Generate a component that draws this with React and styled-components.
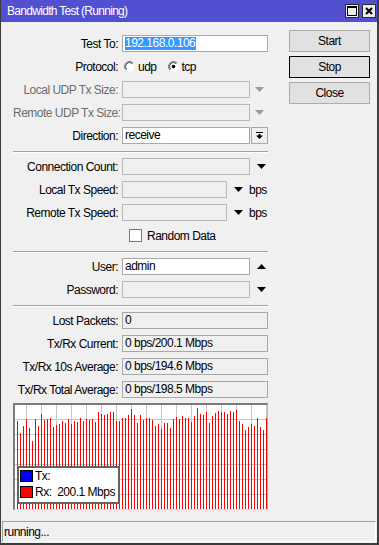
import React from 'react';
import styled, { createGlobalStyle } from 'styled-components';

const Global = createGlobalStyle`
  html, body { margin: 0; padding: 0; background: #f0f0f0; }
  body {
    font-family: "Liberation Sans", Arial, sans-serif;
    font-size: 12px;
    letter-spacing: -0.5px;
    color: #000;
  }
`;

const Window = styled.div`
  width: 379px;
  height: 545px;
  box-sizing: border-box;
  display: flex;
  flex-direction: column;
  background: #f0f0f0;
  border-left: 1px solid #3c3c3c;
  border-right: 2px solid #3c3c3c;
  border-bottom: 2px solid #3c3c3c;
`;

const TitleBar = styled.div`
  height: 22px;
  flex: none;
  background: #5050d0;
  color: #fff;
  display: flex;
  align-items: center;
  padding: 0 1px 0 6px;
  font-size: 12px;
  letter-spacing: -0.7px;
`;

const TitleText = styled.div`
  flex: 1;
  white-space: nowrap;
`;

const TitleButtons = styled.div`
  display: flex;
  gap: 3px;
`;

const TitleBtn = styled.div`
  width: 14px;
  height: 14px;
  box-sizing: border-box;
  border: 1px solid #2a2a2a;
  background: #ececec;
  display: flex;
  align-items: center;
  justify-content: center;
`;

const Main = styled.div`
  display: flex;
  padding: 8px 0 0 12px;
`;

const Form = styled.div`
  width: 255px;
  margin-top: 5px;
  display: flex;
  flex-direction: column;
  gap: 6px;
`;

const Row = styled.div`
  display: grid;
  grid-template-columns: 105px 146px;
  column-gap: 4px;
  align-items: center;
  height: 17px;
`;

const Label = styled.div`
  text-align: right;
  white-space: nowrap;
  color: ${(p) => (p.$disabled ? '#6d6d6d' : '#000')};
`;

const Control = styled.div`
  display: flex;
  align-items: center;
  height: 17px;
`;

const fieldBg = { edit: '#fff', disabled: '#f0f0f0', status: '#f0f0f0' };
const fieldBorder = { edit: '#a8a8a8', disabled: '#b9b9b9', status: '#a8a8a8' };

const Field = styled.div`
  box-sizing: border-box;
  height: 17px;
  width: ${(p) => p.$w}px;
  flex: none;
  border: 1px solid ${(p) => fieldBorder[p.$kind]};
  background: ${(p) => fieldBg[p.$kind]};
  padding: 0 2px;
  line-height: 15px;
  white-space: nowrap;
  overflow: hidden;
`;

const Selected = styled.span`
  background: #3399ff;
  color: #fff;
  display: inline-block;
  line-height: 13px;
  padding: 0 1px 0 0;
`;

const ArrowSlot = styled.div`
  width: ${(p) => p.$w}px;
  flex: none;
  display: flex;
  align-items: center;
  justify-content: center;
`;

const Unit = styled.span`
  margin-left: 0;
`;

const DropBtn = styled.div`
  box-sizing: border-box;
  width: 17px;
  height: 17px;
  margin-left: 1px;
  border: 1px solid #a8a8a8;
  background: #f0f0f0;
  display: flex;
  align-items: center;
  justify-content: center;
`;

const Radios = styled.div`
  display: flex;
  align-items: center;
  padding-left: 2px;
  gap: 11px;
`;

const RadioItem = styled.label`
  display: flex;
  align-items: center;
  gap: 3px;
`;

const CheckRow = styled.div`
  display: flex;
  align-items: center;
  gap: 5px;
  padding-left: 7px;
`;

const CheckBox = styled.div`
  width: 13px;
  height: 13px;
  box-sizing: border-box;
  border: 1px solid #7a7a7a;
  background: #fff;
`;

const Separator = styled.div`
  height: 1px;
  margin-top: 1px;
  background: #a0a0a0;
  box-shadow: 0 1px 0 #fff;
`;

const ButtonCol = styled.div`
  width: 81px;
  margin-left: 21px;
  display: flex;
  flex-direction: column;
  gap: 4px;
`;

const Button = styled.div`
  box-sizing: border-box;
  height: 22px;
  border: 1px solid ${(p) => (p.$focused ? '#000' : '#adadad')};
  background: #e1e1e1;
  display: flex;
  align-items: center;
  justify-content: center;
`;

const Graph = styled.div`
  position: relative;
  box-sizing: border-box;
  height: 107px;
  margin-top: -1px;
  border-top: 2px solid #7c7c7c;
  border-left: 2px solid #7c7c7c;
  border-right: 1px solid #b8b8b8;
  border-bottom: 1px solid #e0e0e0;
  background: #fff;
`;

const Legend = styled.div`
  position: absolute;
  left: 2px;
  top: 61px;
  width: 103px;
  height: 38px;
  box-sizing: border-box;
  border: 2px solid #636363;
  background: #fff;
  display: flex;
  flex-direction: column;
  gap: 4px;
  padding: 2px 0 0 1px;
  white-space: nowrap;
`;

const LegendRow = styled.div`
  display: flex;
  align-items: center;
  height: 12px;
  gap: 2px;
`;

const Swatch = styled.div`
  width: 13px;
  height: 12px;
  box-sizing: border-box;
  border: 1px solid #000;
  background: ${(p) => p.$color};
`;

const StatusBar = styled.div`
  margin: auto 1px 1px 1px;
  height: 21px;
  box-sizing: border-box;
  border-top: 1px solid #a0a0a0;
  border-left: 1px solid #a0a0a0;
  border-right: 1px solid #fff;
  border-bottom: 1px solid #fff;
  display: flex;
  align-items: center;
  padding-left: 1px;
`;

const Arrow = ({ up, color = '#000' }) => (
  <svg width="9" height="5" viewBox="0 0 9 5">
    {up ? <path d="M0 5 L9 5 L4.5 0 Z" fill={color} /> : <path d="M0 0 L9 0 L4.5 5 Z" fill={color} />}
  </svg>
);

const Radio = ({ checked }) => (
  <svg width="11" height="11" viewBox="0 0 11 11">
    <circle cx="5.5" cy="5.5" r="5" fill="#fff" />
    <path d="M1.96 9.04 A5 5 0 0 1 9.04 1.96" stroke="#7a7a7a" strokeWidth="1" fill="none" />
    <path d="M2.67 8.33 A4 4 0 0 1 8.33 2.67" stroke="#3a3a3a" strokeWidth="1" fill="none" />
    {checked && <circle cx="5.5" cy="5.5" r="1.8" fill="#000" />}
  </svg>
);

const tops = [
  420.7, 432.7, 425.7, 419, 428, 440.7, 419, 425.7, 414, 420, 419, 417.7, 426.7, 425, 424,
  420.7, 423.3, 419, 424.3, 420.7, 422.3, 417.7, 420.7, 419, 419.7, 419, 421.7, 412.3, 413.7,
  414.7, 413.7, 412.3, 412, 420.7, 420.7, 417.7, 417.7, 414.7, 409, 414.7, 423.3, 414.7, 420,
  417.7, 417.7, 420, 425.7, 424, 428.7, 422.7, 422.7, 428, 419, 416.7, 419, 415.7, 417.7,
  417.7, 422, 416.3, 407.7, 414, 414.7, 411.7, 422.7, 416.3, 413, 410.7, 412.3, 412.3, 413.7,
  411.3, 412.3, 410.3, 420.7, 424.3, 429.7, 427.3, 424.3, 425.7, 417.7, 426.7, 430, 418,
];

const Chart = () => {
  const W = 252;
  const H = 104;
  const vlines = [];
  for (let x = W - 0.5; x > 0; x -= 15) vlines.push(x);
  const hlines = [];
  for (let y = H - 15 + 0.5; y > 0; y -= 15) hlines.push(y);
  return (
    <svg width={W} height={H} viewBox={`0 0 ${W} ${H}`} style={{ display: 'block' }}>
      {vlines.map((x) => (
        <line key={`v${x}`} x1={x} y1="0" x2={x} y2={H} stroke="#c6c6c6" strokeWidth="1" />
      ))}
      {hlines.map((y) => (
        <line key={`h${y}`} x1="0" y1={y} x2={W} y2={y} stroke="#c6c6c6" strokeWidth="1" />
      ))}
      {tops.map((t, i) => {
        const top = Math.round(t - 405);
        return <rect key={i} x={2 + i * 3} y={top} width="1" height={H - top} fill="#ff0000" shapeRendering="crispEdges" />;
      })}
    </svg>
  );
};

export default function App() {
  return (
    <>
      <Global />
      <Window>
        <TitleBar>
          <TitleText>Bandwidth Test (Running)</TitleText>
          <TitleButtons>
            <TitleBtn>
              <svg width="10" height="10" viewBox="0 0 10 10">
                <rect x="0.5" y="0.5" width="9" height="9" fill="none" stroke="#000" strokeWidth="1" />
                <rect x="0" y="0" width="10" height="2" fill="#000" />
              </svg>
            </TitleBtn>
            <TitleBtn>
              <svg width="8" height="8" viewBox="0 0 8 8">
                <path d="M1 1 L7 7 M7 1 L1 7" stroke="#000" strokeWidth="2" />
              </svg>
            </TitleBtn>
          </TitleButtons>
        </TitleBar>
        <Main>
          <Form>
            <Row>
              <Label>Test To:</Label>
              <Control>
                <Field $kind="edit" $w={146}><Selected>192.168.0.106</Selected></Field>
              </Control>
            </Row>
            <Row>
              <Label>Protocol:</Label>
              <Radios>
                <RadioItem><Radio />udp</RadioItem>
                <RadioItem><Radio checked />tcp</RadioItem>
              </Radios>
            </Row>
            <Row>
              <Label $disabled>Local UDP Tx Size:</Label>
              <Control>
                <Field $kind="disabled" $w={128} />
                <ArrowSlot $w={18}><Arrow color="#9a9a9a" /></ArrowSlot>
              </Control>
            </Row>
            <Row>
              <Label $disabled>Remote UDP Tx Size:</Label>
              <Control>
                <Field $kind="disabled" $w={128} />
                <ArrowSlot $w={18}><Arrow color="#9a9a9a" /></ArrowSlot>
              </Control>
            </Row>
            <Row>
              <Label>Direction:</Label>
              <Control>
                <Field $kind="edit" $w={128}>receive</Field>
                <DropBtn>
                  <svg width="9" height="9" viewBox="0 0 9 9">
                    <rect x="1" y="1" width="7" height="1" fill="#000" />
                    <rect x="3.5" y="3" width="2" height="2" fill="#000" />
                    <path d="M1 4.5 L8 4.5 L4.5 8 Z" fill="#000" />
                  </svg>
                </DropBtn>
              </Control>
            </Row>
            <Separator />
            <Row>
              <Label>Connection Count:</Label>
              <Control>
                <Field $kind="disabled" $w={128} />
                <ArrowSlot $w={22}><Arrow /></ArrowSlot>
              </Control>
            </Row>
            <Row>
              <Label>Local Tx Speed:</Label>
              <Control>
                <Field $kind="disabled" $w={105} />
                <ArrowSlot $w={22}><Arrow /></ArrowSlot>
                <Unit>bps</Unit>
              </Control>
            </Row>
            <Row>
              <Label>Remote Tx Speed:</Label>
              <Control>
                <Field $kind="disabled" $w={105} />
                <ArrowSlot $w={22}><Arrow /></ArrowSlot>
                <Unit>bps</Unit>
              </Control>
            </Row>
            <Row>
              <span />
              <CheckRow>
                <CheckBox />
                Random Data
              </CheckRow>
            </Row>
            <Separator />
            <Row>
              <Label>User:</Label>
              <Control>
                <Field $kind="edit" $w={128}>admin</Field>
                <ArrowSlot $w={22}><Arrow up /></ArrowSlot>
              </Control>
            </Row>
            <Row>
              <Label>Password:</Label>
              <Control>
                <Field $kind="disabled" $w={128} />
                <ArrowSlot $w={22}><Arrow /></ArrowSlot>
              </Control>
            </Row>
            <Separator />
            <Row>
              <Label>Lost Packets:</Label>
              <Control><Field $kind="status" $w={146}>0</Field></Control>
            </Row>
            <Row>
              <Label>Tx/Rx Current:</Label>
              <Control><Field $kind="status" $w={146}>0 bps/200.1 Mbps</Field></Control>
            </Row>
            <Row>
              <Label>Tx/Rx 10s Average:</Label>
              <Control><Field $kind="status" $w={146}>0 bps/194.6 Mbps</Field></Control>
            </Row>
            <Row>
              <Label>Tx/Rx Total Average:</Label>
              <Control><Field $kind="status" $w={146}>0 bps/198.5 Mbps</Field></Control>
            </Row>
            <Graph>
              <Chart />
              <Legend>
                <LegendRow><Swatch $color="#0000ff" />Tx:</LegendRow>
                <LegendRow><Swatch $color="#ff0000" />Rx:&nbsp;&nbsp;200.1 Mbps</LegendRow>
              </Legend>
            </Graph>
          </Form>
          <ButtonCol>
            <Button>Start</Button>
            <Button $focused>Stop</Button>
            <Button>Close</Button>
          </ButtonCol>
        </Main>
        <StatusBar>running...</StatusBar>
      </Window>
    </>
  );
}
